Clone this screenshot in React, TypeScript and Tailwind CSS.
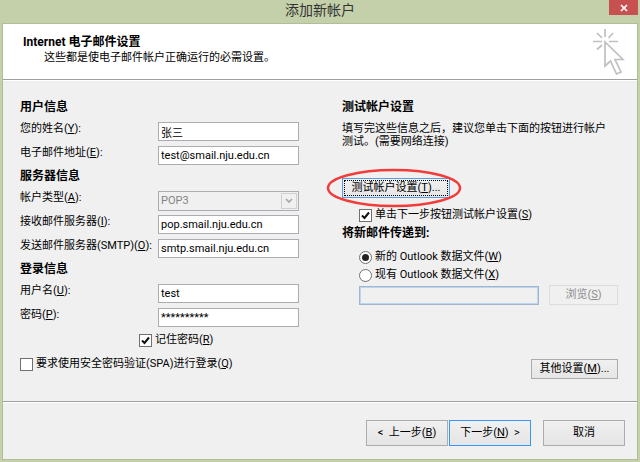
import React, { useState } from "react";

type MnemonicProps = { text: string; k: string; after?: string };

function Mnemonic({ text, k, after = "" }: MnemonicProps) {
  return (
    <span className="whitespace-nowrap">
      {text}(<span className="underline underline-offset-1">{k}</span>){after}
    </span>
  );
}

type FieldProps = {
  id: string;
  text: string;
  k: string;
  value: string;
  onChange: (value: string) => void;
};

function Field({ id, text, k, value, onChange }: FieldProps) {
  return (
    <div className="flex h-6 items-start justify-between">
      <label htmlFor={id} className="leading-[14px]">
        <Mnemonic text={text} k={k} after=":" />
      </label>
      <input
        id={id}
        type="text"
        autoComplete="off"
        className="h-[19px] w-[141px] border border-[#abadb3] bg-white px-0.5 outline-none focus:border-[#569de5]"
        value={value}
        onChange={(e) => onChange(e.target.value)}
      />
    </div>
  );
}

type CheckProps = MnemonicProps & {
  checked: boolean;
  onChange: (checked: boolean) => void;
};

function Check({ text, k, checked, onChange }: CheckProps) {
  return (
    <label className="inline-flex h-4 items-center gap-[3px]">
      <span className="grid">
        <input
          type="checkbox"
          className="h-[13px] w-[13px] appearance-none border border-[#707070] bg-white [grid-area:1/1]"
          checked={checked}
          onChange={(e) => onChange(e.target.checked)}
        />
        {checked ? (
          <svg viewBox="0 0 13 13" className="pointer-events-none h-[13px] w-[13px] [grid-area:1/1]">
            <path d="M3 6.5 L5.5 9 L10 3.5" fill="none" stroke="#111" strokeWidth="2" />
          </svg>
        ) : null}
      </span>
      <Mnemonic text={text} k={k} />
    </label>
  );
}

type RadioProps = MnemonicProps & {
  checked: boolean;
  onSelect: () => void;
};

function Radio({ text, k, checked, onSelect }: RadioProps) {
  return (
    <label className="flex h-[18px] items-center gap-[3px]">
      <span className="grid">
        <input
          type="radio"
          name="delivery"
          className="h-[13px] w-[13px] appearance-none rounded-full border border-[#707070] bg-white [grid-area:1/1]"
          checked={checked}
          onChange={onSelect}
        />
        {checked ? (
          <span className="pointer-events-none h-[7px] w-[7px] self-center justify-self-center rounded-full bg-[#222222] [grid-area:1/1]" />
        ) : null}
      </span>
      <Mnemonic text={text} k={k} />
    </label>
  );
}

const heading = "h-[21px] text-xs leading-3 font-bold";
const button =
  "border border-[#acacac] bg-linear-to-b from-[#f0f0f0] to-[#e5e5e5] hover:border-[#569de5]";

export default function App() {
  const [name, setName] = useState("张三");
  const [email, setEmail] = useState("test@smail.nju.edu.cn");
  const [incoming, setIncoming] = useState("pop.smail.nju.edu.cn");
  const [outgoing, setOutgoing] = useState("smtp.smail.nju.edu.cn");
  const [user, setUser] = useState("test");
  const [password, setPassword] = useState("**********");
  const [remember, setRemember] = useState(true);
  const [spa, setSpa] = useState(false);
  const [autoTest, setAutoTest] = useState(true);
  const [delivery, setDelivery] = useState<"new" | "existing">("new");

  return (
    <div
      lang="zh-CN"
      className="flex min-h-screen flex-col bg-[#c3d0a9] px-[3px] pb-[3px] font-['Roboto','Noto_Sans_CJK_SC',sans-serif] text-[11px] text-black"
    >
      <header className="relative flex h-6 justify-center">
        <h1 className="text-sm leading-5 text-[#333333]">添加新帐户</h1>
        <button
          type="button"
          aria-label="关闭"
          className="absolute top-0 -right-px flex h-[15px] w-[29px] items-center justify-center bg-[#c75050]"
        >
          <svg viewBox="0 0 8 8" className="h-2 w-2">
            <path d="M1 1 L7 7 M7 1 L1 7" stroke="#fff" strokeWidth="1.7" />
          </svg>
        </button>
      </header>

      <main className="flex flex-1 flex-col bg-[#f0f0f0] outline outline-[#b0bd98]">
        <div className="flex h-14 justify-between border-b border-[#a0a0a0] bg-white pt-1 pr-3 pl-5">
          <div className="pt-1.5">
            <h2 className="text-xs leading-4 font-bold">Internet 电子邮件设置</h2>
            <p className="pl-[21px] leading-4">这些都是使电子邮件帐户正确运行的必需设置。</p>
          </div>
          <svg viewBox="0 0 33 48" className="h-12 w-[33px]" fill="none" stroke="#c0c0c0" strokeWidth="1.7">
            <path d="M13 1V9 M1 13.5H10 M17 13.5H26 M5 5L10 10 M21 5L16.5 10 M5 21.5L10 17" />
            <path d="M13 14V38L18.5 33L24.5 46L29 44L23 31.5H31Z" />
          </svg>
        </div>

        <div className="grid flex-1 grid-cols-[279fr_276fr] gap-[43px] border-t border-white pt-5 pr-[19px] pl-[17px]">
          <section>
            <h3 className={heading}>用户信息</h3>
            <Field id="name" text="您的姓名" k="Y" value={name} onChange={setName} />
            <Field id="email" text="电子邮件地址" k="E" value={email} onChange={setEmail} />

            <h3 className={heading}>服务器信息</h3>
            <div className="flex h-6 items-start justify-between">
              <label htmlFor="type" className="leading-[14px]">
                <Mnemonic text="帐户类型" k="A" after=":" />
              </label>
              <div className="grid w-[141px]">
                <select
                  id="type"
                  disabled
                  className="h-5 appearance-none border border-[#abadb3] bg-[#f0f0f0] px-0.5 text-[#838383] opacity-100 [grid-area:1/1]"
                >
                  <option>POP3</option>
                </select>
                <span className="pointer-events-none mr-0.5 flex h-4 w-4 items-center justify-center self-center justify-self-end border border-[#d0d0d0] [grid-area:1/1]">
                  <svg viewBox="0 0 8 6" className="h-1.5 w-2">
                    <path d="M1 1 L4 4 L7 1" fill="none" stroke="#a8a8a8" strokeWidth="1.7" />
                  </svg>
                </span>
              </div>
            </div>
            <Field id="incoming" text="接收邮件服务器" k="I" value={incoming} onChange={setIncoming} />
            <Field id="outgoing" text="发送邮件服务器(SMTP)" k="O" value={outgoing} onChange={setOutgoing} />

            <h3 className={heading}>登录信息</h3>
            <Field id="user" text="用户名" k="U" value={user} onChange={setUser} />
            <Field id="password" text="密码" k="P" value={password} onChange={setPassword} />
            <div className="flex h-6 pl-[119px]">
              <Check text="记住密码" k="R" checked={remember} onChange={setRemember} />
            </div>
            <Check text="要求使用安全密码验证(SPA)进行登录" k="Q" checked={spa} onChange={setSpa} />
          </section>

          <section className="flex flex-col items-start">
            <h3 className={heading}>测试帐户设置</h3>
            <p className="pr-2 leading-[13px]">
              填写完这些信息之后，建议您单击下面的按钮进行帐户测试。(需要网络连接)
            </p>
            <div className="relative mt-[30px] mb-[9px]">
              <button
                type="button"
                className="h-5 w-[108px] border border-[#569de5] bg-linear-to-b from-[#f0f0f0] to-[#e5e5e5] p-px"
              >
                <span className="flex h-full items-center justify-center border border-dotted border-black">
                  <Mnemonic text="测试帐户设置" k="T" after="..." />
                </span>
              </button>
              <svg viewBox="0 0 136 40" className="pointer-events-none absolute -top-2.5 -left-4 h-10 w-[136px] max-w-none">
                <ellipse cx="68" cy="20" rx="66" ry="18" fill="none" stroke="#f23c3c" strokeWidth="2.5" />
              </svg>
            </div>
            <div className="flex pl-[17px]">
              <Check text="单击下一步按钮测试帐户设置" k="S" checked={autoTest} onChange={setAutoTest} />
            </div>
            <h3 className="mt-1 h-[21px] text-xs leading-3 font-bold">将新邮件传递到:</h3>
            <div className="flex w-full flex-col pl-[17px]">
              <Radio text="新的 Outlook 数据文件" k="W" checked={delivery === "new"} onSelect={() => setDelivery("new")} />
              <Radio text="现有 Outlook 数据文件" k="X" checked={delivery === "existing"} onSelect={() => setDelivery("existing")} />
              <div className="mt-px flex items-center gap-2.5">
                <input
                  type="text"
                  aria-label="数据文件"
                  disabled
                  className="h-[19px] min-w-0 flex-1 border border-[#a5b4c6] bg-[#f0f0f0] ring-1 ring-[#b9d6f3] ring-inset"
                />
                <button type="button" disabled className="h-5 w-[69px] border border-[#dcdcdc] text-[#8c8c8c]">
                  <Mnemonic text="浏览" k="S" />
                </button>
              </div>
            </div>
            <button type="button" className={`${button} mt-[54px] h-5 w-[87px] self-end`}>
              <Mnemonic text="其他设置" k="M" after="..." />
            </button>
          </section>
        </div>

        <footer className="border-t border-[#a0a0a0]">
          <div className="flex h-[57px] items-start justify-end border-t border-white pt-[17px] pr-3">
            <button type="button" className={`${button} h-[26px] w-[82px]`}>
              &lt;&nbsp; <Mnemonic text="上一步" k="B" />
            </button>
            <button
              type="button"
              className="ml-px h-[26px] w-[82px] border border-[#3399ff] bg-linear-to-b from-[#f0f0f0] to-[#e5e5e5]"
            >
              <Mnemonic text="下一步" k="N" /> &nbsp;&gt;
            </button>
            <button type="button" className={`${button} ml-3 h-[26px] w-[82px]`}>
              取消
            </button>
          </div>
        </footer>
      </main>
    </div>
  );
}
